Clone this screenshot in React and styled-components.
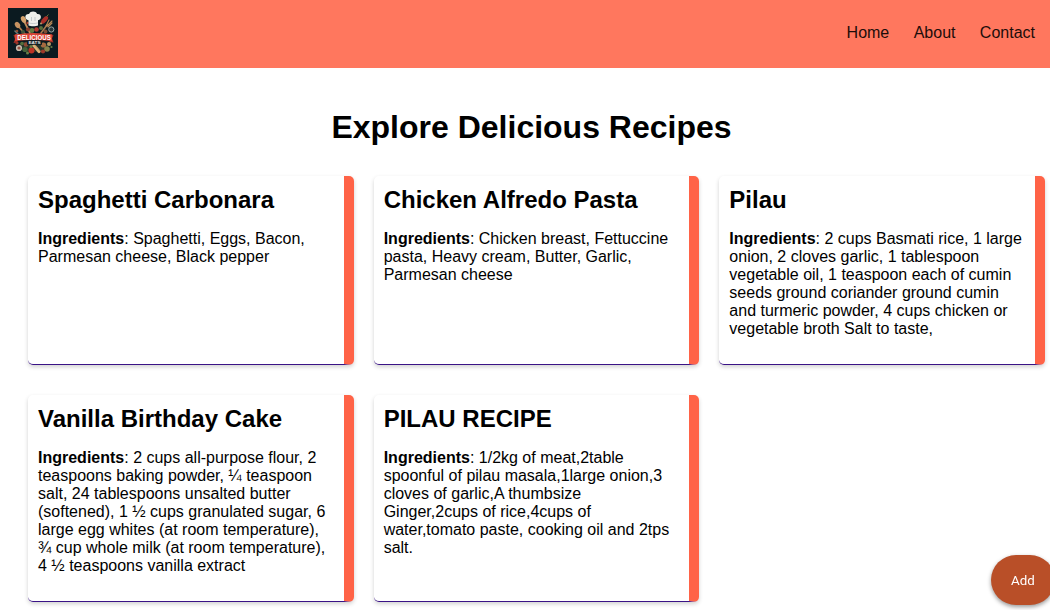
import React from "react";
import styled, { createGlobalStyle } from "styled-components";

const GlobalStyle = createGlobalStyle`
  * { box-sizing: border-box; }
  html, body { margin: 0; height: 100%; overflow: hidden; }
  body {
    background: #fff;
    color: #000;
    font-family: "Liberation Sans", Arial, sans-serif;
    font-size: 16px;
    line-height: 18px;
  }
`;

const NavBar = styled.header`
  display: flex;
  justify-content: space-between;
  height: 68px;
  padding: 8px 15px 0 8px;
  background: #ff775e;
`;

const Logo = styled.svg`
  display: block;
  width: 50px;
  height: 50px;
`;

const NavLinks = styled.nav`
  display: flex;
  gap: 24.4px;
  padding-top: 16px;
`;

const NavLink = styled.a`
  color: #1c0d0a;
`;

const Main = styled.main`
  padding: 41px 5px 0 28px;
`;

const PageTitle = styled.h1`
  margin: 0 0 31px;
  padding-right: 10px;
  font-size: 32px;
  line-height: 36px;
  text-align: center;
`;

const RecipeGrid = styled.div`
  display: grid;
  grid-template-columns: repeat(3, 1fr);
  gap: 30px 20px;
`;

const Card = styled.article`
  padding: 10px;
  border-right: 10px solid #ff6347;
  border-bottom: 1px solid #3a1386;
  border-radius: 5px;
  box-shadow: 0 2px 4px rgba(0, 0, 0, 0.18);
`;

const CardTitle = styled.h2`
  margin: 0 0 16px;
  font-size: 24px;
  line-height: 28px;
`;

const Ingredients = styled.p`
  margin: 0 0 16px;
`;

const AddButton = styled.button`
  position: fixed;
  top: 555px;
  left: 991px;
  width: 64px;
  height: 50px;
  padding: 0 0 0 20px;
  border: 0;
  border-radius: 25px;
  background: #b94f28;
  color: #fff;
  font: 400 13.33px Roboto, sans-serif;
  text-align: left;
  box-shadow: 0 2px 4px rgba(0, 0, 0, 0.4);
`;

const recipes = [
  {
    title: "Spaghetti Carbonara",
    items: "Spaghetti, Eggs, Bacon, Parmesan cheese, Black pepper",
  },
  {
    title: "Chicken Alfredo Pasta",
    items:
      "Chicken breast, Fettuccine pasta, Heavy cream, Butter, Garlic, Parmesan cheese",
  },
  {
    title: "Pilau",
    items:
      "2 cups Basmati rice, 1 large onion, 2 cloves garlic, 1 tablespoon vegetable oil, 1 teaspoon each of cumin seeds ground coriander ground cumin and turmeric powder, 4 cups chicken or vegetable broth Salt to taste,",
  },
  {
    title: "Vanilla Birthday Cake",
    items:
      "2 cups all-purpose flour, 2 teaspoons baking powder, ¼ teaspoon salt, 24 tablespoons unsalted butter (softened), 1 ½ cups granulated sugar, 6 large egg whites (at room temperature), ¾ cup whole milk (at room temperature), 4 ½ teaspoons vanilla extract",
  },
  {
    title: "PILAU RECIPE",
    items:
      "1/2kg of meat,2table spoonful of pilau masala,1large onion,3 cloves of garlic,A thumbsize Ginger,2cups of rice,4cups of water,tomato paste, cooking oil and 2tps salt.",
  },
];

function BrandLogo() {
  return (
    <Logo viewBox="0 0 50 50" role="img">
      <rect width="50" height="50" fill="#0b1a20" />
      {/* spoons and whisks */}
      <g strokeLinecap="round" fill="none">
        <path d="M16 13l6 12" stroke="#c08c5a" strokeWidth="1.8" />
        <path d="M11 19l6 7" stroke="#b07b4c" strokeWidth="1.8" />
        <path d="M39 17l-6 8" stroke="#a97a50" strokeWidth="1.6" />
        <path d="M7 23l3 3" stroke="#6c7d7c" strokeWidth="1.5" />
        <path d="M38 18l3-6M39 18l5-5M40 19l4-4" stroke="#b68955" strokeWidth="1.1" />
      </g>
      <ellipse cx="15.5" cy="11.5" rx="2.4" ry="3.6" transform="rotate(-25 15.5 11.5)" fill="#d4a26c" />
      <ellipse cx="9.5" cy="17" rx="2.4" ry="3.3" transform="rotate(-35 9.5 17)" fill="#c79261" />
      <circle cx="43.3" cy="21.5" r="2.6" fill="#26363a" stroke="#99a4a2" />
      {/* vegetables above the ribbon */}
      <ellipse cx="36.5" cy="12" rx="4.7" ry="2.2" transform="rotate(-48 36.5 12)" fill="#a92f29" />
      <path d="M38.5 8.5l2-2" stroke="#5d7a3b" />
      <circle cx="19.5" cy="15" r="1.2" fill="#a9392c" />
      <circle cx="9" cy="23" r="1.3" fill="#914b32" />
      <circle cx="15" cy="24" r="2" fill="#40543a" />
      <circle cx="20" cy="21.5" r="2.1" fill="#8c3f2c" />
      <circle cx="24" cy="22.5" r="2.4" fill="#637a42" />
      <circle cx="28.5" cy="21.5" r="2.3" fill="#b0392c" />
      <circle cx="33" cy="20" r="2" fill="#586e3c" />
      <circle cx="37.5" cy="23.5" r="2" fill="#7d4b33" />
      <circle cx="33" cy="15.5" r=".9" fill="#c8a878" />
      {/* chef hat */}
      <path
        d="M20.5 17.5v-5.2c-4.5-1-4-6.8.6-6.3 1.2-3.2 6.8-3.2 8 0 4.4-.7 5.4 5.3.9 6.3v5.2c-2 1-7.5 1-9.500 0z"
        fill="#eef0ec"
      />
      <path
        d="M20.500 14.800c3 1 6.500 1 9.500 0M23.500 9v4M27 9v4"
        stroke="#a9b4b8"
        strokeWidth=".6"
        fill="none"
      />
      {/* food below the ribbon */}
      <ellipse cx="25" cy="38.500" rx="15" ry="5.500" fill="#26352a" />
      <circle cx="11" cy="40" r="3.100" fill="#c9beb0" />
      <circle cx="11" cy="40" r="1.600" fill="#965040" />
      <circle cx="9" cy="35" r="1.600" fill="#9b3a2b" />
      <circle cx="14" cy="35.500" r="1.800" fill="#56703e" />
      <circle cx="18" cy="36.500" r="2.300" fill="#8d4933" />
      <circle cx="17" cy="41.500" r="2.600" fill="#44633a" />
      <circle cx="19.500" cy="45" r="1.500" fill="#698148" />
      <circle cx="23.500" cy="42.500" r="3" fill="#bd3324" />
      <circle cx="23" cy="38.500" r="1.500" fill="#6d8045" />
      <path d="M26 37.500l5 6" stroke="#dfb479" strokeWidth="3.200" strokeLinecap="round" />
      <path d="M27 37l5 6" stroke="#a97848" strokeWidth=".6" />
      <circle cx="35.500" cy="37" r="2.600" fill="#a76a40" />
      <circle cx="39" cy="41" r="2.800" fill="#87844b" />
      <circle cx="35" cy="43.500" r="2.100" fill="#9d3a2a" />
      <circle cx="41" cy="36" r="2" fill="#b89b67" />
      <circle cx="43.500" cy="39" r="1.100" fill="#687a43" />
      {/* ribbon */}
      <path d="M5.500 27l4-1v8.500l-4 .5 1.500-4zM45.500 27l-4-1v8l4 .5-1.500-4z" fill="#9f2e25" />
      <path d="M7 26.500q18.500-3 37 0v6.500q-18.500-2-37 0z" fill="#db4535" />
      <text
        x="26"
        y="31.500"
        textAnchor="middle"
        textLength="33.500"
        lengthAdjust="spacingAndGlyphs"
        fontSize="6.300"
        fontWeight="700"
        fill="#fff"
      >
        DELICIOUS
      </text>
      <path d="M19 32.800h15v4H19z" fill="#0b1a20" />
      <text
        x="26.500"
        y="36.200"
        textAnchor="middle"
        textLength="12"
        lengthAdjust="spacingAndGlyphs"
        fontSize="4"
        fontWeight="700"
        fill="#e6e8e4"
      >
        EATS
      </text>
    </Logo>
  );
}

export default function App() {
  return (
    <>
      <GlobalStyle />
      <NavBar>
        <BrandLogo />
        <NavLinks>
          <NavLink>Home</NavLink>
          <NavLink>About</NavLink>
          <NavLink>Contact</NavLink>
        </NavLinks>
      </NavBar>
      <Main>
        <PageTitle>Explore Delicious Recipes</PageTitle>
        <RecipeGrid>
          {recipes.map((recipe) => (
            <Card key={recipe.title}>
              <CardTitle>{recipe.title}</CardTitle>
              <Ingredients>
                <strong>Ingredients</strong>: {recipe.items}
              </Ingredients>
            </Card>
          ))}
        </RecipeGrid>
      </Main>
      <AddButton>Add</AddButton>
    </>
  );
}
